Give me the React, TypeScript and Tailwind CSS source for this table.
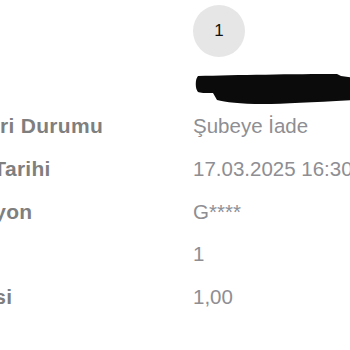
const rows = [
    { label: "Gönderi Durumu", value: "Şubeye İade" },
    { label: "İşlem Tarihi", value: "17.03.2025 16:30" },
    { label: "Lokasyon", value: "G****" },
    { label: "Adet", value: "1" },
    { label: "Kg/Desi", value: "1,00" },
]

export default function App() {
    return (
        <div className="w-[350px] h-[350px] overflow-hidden bg-white font-['Liberation_Sans',Arial,sans-serif]">
            <div className="-ml-[68px] pt-[5px] grid grid-cols-[261px_1fr]">
                {/* step badge */}
                <div />
                <div className="w-[52px] h-[52px] rounded-full bg-[#e6e6e6] flex items-center justify-center text-[17px] text-[#111]">
                    1
                </div>

                {/* redacted name */}
                <div />
                <div className="mt-[17px] h-[30px] pl-[2px]">
                    <svg width="160" height="30" viewBox="0 0 160 30" fill="#0b0b0b">
                        <path d="M3 2 C40 1 100 0 142 0 L146 2 L160 4 L160 26 C120 28 90 30 68 30 C45 30 30 28 22 26 L18 19 C10 19 5 19 3 18 C0 15 0 5 3 2 Z" />
                    </svg>
                </div>

                {rows.map((r) => (
                    <div key={r.label} className="contents">
                        <div className="h-[42.75px] leading-[43px] text-[21px] tracking-[0.3px] font-bold text-[#7f7f7f] whitespace-nowrap">
                            {r.label}
                        </div>
                        <div className="h-[42.75px] leading-[43px] text-[20.5px] text-[#8e8e93] whitespace-nowrap">
                            {r.value}
                        </div>
                    </div>
                ))}
            </div>
        </div>
    )
}
